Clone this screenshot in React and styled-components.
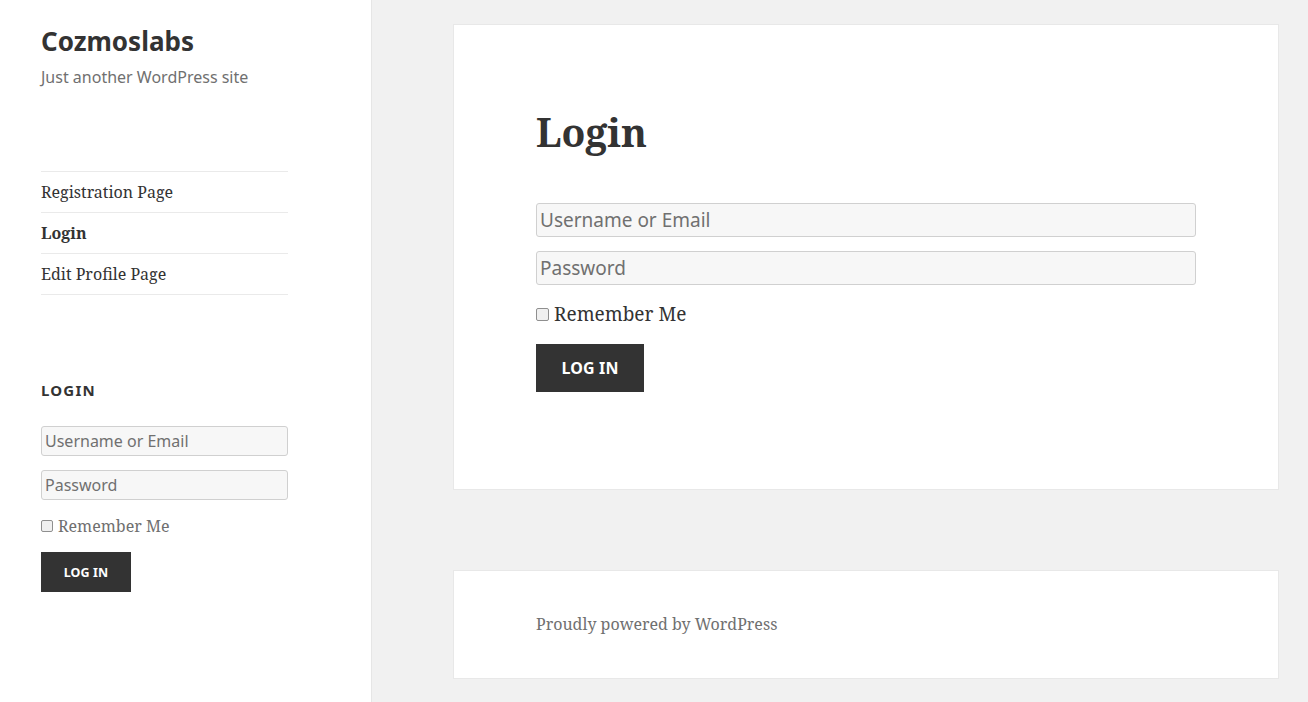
import React from "react";
import styled, { createGlobalStyle } from "styled-components";

const SANS = `"Noto Sans", "Open Sans", sans-serif`;
const SERIF = `"Noto Serif", "DejaVu Serif", serif`;

const GlobalStyle = createGlobalStyle`
  html, body {
    margin: 0;
    padding: 0;
    background: #f1f1f1;
    color: #333;
    font-family: ${SERIF};
  }
  * {
    box-sizing: border-box;
  }
`;

const Page = styled.div`
  display: flex;
  min-height: 100vh;
`;

const Sidebar = styled.aside`
  width: 372px;
  flex-shrink: 0;
  background: #fff;
  border-right: 1px solid #e6e6e6;
  padding: 24px 83px 0 41px;
`;

const SiteTitle = styled.h1`
  margin: 0;
  font-family: ${SANS};
  font-weight: 700;
  font-size: 26px;
  line-height: 34px;
  color: #333;
`;

const Tagline = styled.p`
  margin: 9px 0 0;
  font-family: ${SANS};
  font-size: 16px;
  line-height: 20px;
  color: #707070;
`;

const Nav = styled.ul`
  list-style: none;
  margin: 84px 0 0;
  padding: 0;
  border-top: 1px solid #eaeaea;
`;

const NavItem = styled.li`
  border-bottom: 1px solid #eaeaea;
  padding: 10px 0;
  font-family: ${SERIF};
  font-size: 16px;
  line-height: 20px;
  font-weight: ${(p) => (p.$current ? 700 : 400)};
  color: #333;
`;

const Widget = styled.section`
  margin-top: 85px;
`;

const WidgetTitle = styled.h2`
  margin: 0 0 26px;
  font-family: ${SANS};
  font-weight: 700;
  font-size: 15px;
  line-height: 20px;
  letter-spacing: 0.08em;
  text-transform: uppercase;
  color: #333;
`;

const Form = styled.form`
  display: flex;
  flex-direction: column;
  align-items: flex-start;
  gap: 14px;
`;

const Field = styled.input`
  width: 100%;
  height: ${(p) => (p.$big ? "34px" : "30px")};
  margin: 0;
  padding: 0 3px;
  background: #f7f7f7;
  border: 1px solid #d0d0d0;
  border-radius: 3px;
  font-family: ${SANS};
  font-size: ${(p) => (p.$big ? "19px" : "16px")};
  color: #707070;
  outline: none;
  &::placeholder {
    color: #707070;
  }
`;

const CheckRow = styled.label`
  display: flex;
  align-items: center;
  gap: 5px;
  margin-top: ${(p) => (p.$big ? "3px" : "0")};
  font-family: ${SERIF};
  font-size: ${(p) => (p.$big ? "19px" : "16px")};
  line-height: 24px;
  color: ${(p) => (p.$big ? "#333" : "#707070")};
`;

const Box = styled.span`
  width: ${(p) => (p.$big ? "13px" : "12px")};
  height: ${(p) => (p.$big ? "13px" : "12px")};
  border: 1px solid #8f8f8f;
  border-radius: 2px;
  background: #f0f0f0;
  flex-shrink: 0;
`;

const Button = styled.button`
  margin-top: ${(p) => (p.$big ? "4px" : "0")};
  border: 0;
  border-radius: 0;
  background: #333;
  color: #fff;
  font-family: ${SANS};
  font-weight: 700;
  text-transform: uppercase;
  font-size: ${(p) => (p.$big ? "16px" : "12.5px")};
  letter-spacing: 0.01em;
  width: ${(p) => (p.$big ? "108px" : "90px")};
  height: ${(p) => (p.$big ? "48px" : "40px")};
  padding: 0;
`;

const Main = styled.main`
  flex: 1;
  padding: 24px 30px 24px 81px;
  display: flex;
  flex-direction: column;
  gap: 80px;
`;

const Card = styled.article`
  background: #fff;
  border: 1px solid #e8e8e8;
  padding: 84px 82px 97px;
`;

const PageTitle = styled.h1`
  margin: 0 0 48px;
  font-family: ${SERIF};
  font-weight: 700;
  font-size: 39px;
  line-height: 46px;
  color: #333;
`;

const MainForm = styled(Form)`
  width: 660px;
`;

const Footer = styled.footer`
  background: #fff;
  border: 1px solid #e8e8e8;
  padding: 41px 82px 42px;
  font-family: ${SERIF};
  font-size: 16px;
  line-height: 24px;
  color: #707070;
`;

const LoginForm = ({ big }) => (
  <>
    <Field $big={big} placeholder="Username or Email" />
    <Field $big={big} type="password" placeholder="Password" />
    <CheckRow $big={big}>
      <Box $big={big} />
      Remember Me
    </CheckRow>
    <Button $big={big} type="button">
      Log In
    </Button>
  </>
);

const App = () => {
  return (
    <>
      <GlobalStyle />
      <Page>
        <Sidebar>
          <SiteTitle>Cozmoslabs</SiteTitle>
          <Tagline>Just another WordPress site</Tagline>
          <Nav>
            <NavItem>Registration Page</NavItem>
            <NavItem $current>Login</NavItem>
            <NavItem>Edit Profile Page</NavItem>
          </Nav>
          <Widget>
            <WidgetTitle>Login</WidgetTitle>
            <Form onSubmit={(e) => e.preventDefault()}>
              <LoginForm />
            </Form>
          </Widget>
        </Sidebar>
        <Main>
          <Card>
            <PageTitle>Login</PageTitle>
            <MainForm $big onSubmit={(e) => e.preventDefault()}>
              <LoginForm big />
            </MainForm>
          </Card>
          <Footer>Proudly powered by WordPress</Footer>
        </Main>
      </Page>
    </>
  );
};

export default App;
